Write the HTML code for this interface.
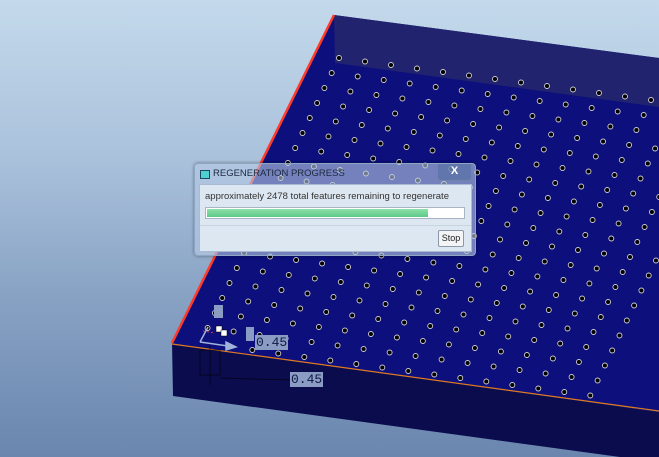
<!DOCTYPE html>
<html><head><meta charset="utf-8"><style>
html,body{margin:0;padding:0;width:659px;height:457px;overflow:hidden;font-family:"Liberation Sans",sans-serif}
.bg{position:absolute;left:0;top:0;width:659px;height:457px;background:linear-gradient(180deg,#c4d9eb 0%,#a9c1db 35%,#88a2c4 65%,#6a86ae 100%)}
svg{position:absolute;left:0;top:0}
.dlg{position:absolute;left:194px;top:163px;width:280px;height:91px;border:1px solid #8fa6c2;border-radius:4px;background:rgba(180,200,228,0.62);box-shadow:0 0 3px rgba(0,0,0,0.4)}
.title{position:absolute;left:18px;top:4px;font-size:9.5px;color:#1a2a40}
.ico{position:absolute;left:5px;top:6px;width:8px;height:7px;background:#4fd0d0;border:1px solid #1a4a60}
.close{position:absolute;left:242px;top:0;width:33px;height:16px;border:1px solid #6f86a8;border-top:none;border-radius:0 0 4px 4px;background:rgba(80,110,160,0.55);color:#fff;font-size:11px;font-weight:bold;text-align:center;line-height:15px}
.body{position:absolute;left:4px;top:20px;width:271px;height:66px;background:#dde7f1;border:1px solid #a9bbd0}
.msg{position:absolute;left:5px;top:6px;font-size:9.5px;color:#333}
.bar{position:absolute;left:5px;top:22px;width:258px;height:10px;background:#fff;border:1px solid #a8b6c4}
.fill{position:absolute;left:1px;top:1px;width:221px;height:8px;background:linear-gradient(#8ee0a8,#5cc988)}
.sep{position:absolute;left:0;top:40px;width:271px;height:1px;background:#c8d4e0}
.stop{position:absolute;left:238px;top:45px;width:24px;height:15px;border:1px solid #8a98aa;background:#f2f4f6;font-size:9px;text-align:center;line-height:15px;color:#222;border-radius:2px}
.dim{position:absolute;background:#8a9cc4;color:#101840;font-family:"Liberation Mono",monospace;font-size:13px;line-height:15px;padding:0 1px}
</style></head><body>
<div class="bg"></div>
<svg width="659" height="457" id="s">
<polygon points="172,343 173,396 620,457 659,462 659,412" fill="#0b0c4e"/>
<polygon points="334,15 659,58 659,412 172,344" fill="#0c0f7c"/>
<polygon points="334,15 659,58 659,107 335,63" fill="#21236e"/>
<line x1="334" y1="15" x2="172" y2="343" stroke="#ff3a2a" stroke-width="2.5"/>
<line x1="172" y1="344" x2="659" y2="411" stroke="#e07a20" stroke-width="1.2"/>
<g id="dots"></g>
<g stroke="#9fb4d8" stroke-width="1.5" fill="none">
<line x1="200" y1="342" x2="208" y2="327"/>
<line x1="200" y1="342" x2="228" y2="346"/>
<polygon points="226,342 236,347 226,350" fill="#9fb4d8"/>
</g>
<line x1="203" y1="331" x2="215" y2="333" stroke="#d04050" stroke-width="1" stroke-dasharray="2,2"/>
<g stroke="#000" stroke-width="1" fill="none" opacity="0.6">
<rect x="200" y="350" width="20" height="25"/>
<line x1="210" y1="345" x2="210" y2="385"/>
<line x1="220" y1="378" x2="290" y2="380"/>
</g>
<rect x="216" y="326" width="6" height="6" fill="#fff" stroke="#000" stroke-width="0.5"/>
<rect x="221" y="330" width="6" height="6" fill="#fff" stroke="#000" stroke-width="0.5"/>
<rect x="214" y="305" width="9" height="13" fill="#8a9cc4"/>
<rect x="246" y="327" width="8" height="14" fill="#8a9cc4"/>
</svg>
<div class="dim" style="left:255px;top:335px">0.45</div>
<div class="dim" style="left:290px;top:372px">0.45</div>
<div class="dlg">
<div class="ico"></div>
<div class="title">REGENERATION PROGRESS</div>
<div class="close">X</div>
<div class="body">
<div class="msg">approximately 2478 total features remaining to regenerate</div>
<div class="bar"><div class="fill"></div></div>
<div class="sep"></div>
<div class="stop">Stop</div>
</div>
</div>
<script>
var g=document.getElementById('dots'),h='';
for(var i=0;i<24;i++)for(var j=-2;j<16;j++){
var x=339+26*j-7.3*i,y=58+3.5*j+15*i;
var lx=334-(y-15)*162/328; if(x<lx+6)continue;
var oy=344+(x-172)*67/487; if(y>oy-5)continue;
var ty=15+(x-334)*43/325; if(y<ty+40)continue;
if(x>662)continue;
h+='<circle cx="'+x.toFixed(1)+'" cy="'+y.toFixed(1)+'" r="2.5" fill="#000" stroke="#cfcfcf" stroke-width="0.9"/>';}
g.innerHTML=h;
</script>
</body></html>
